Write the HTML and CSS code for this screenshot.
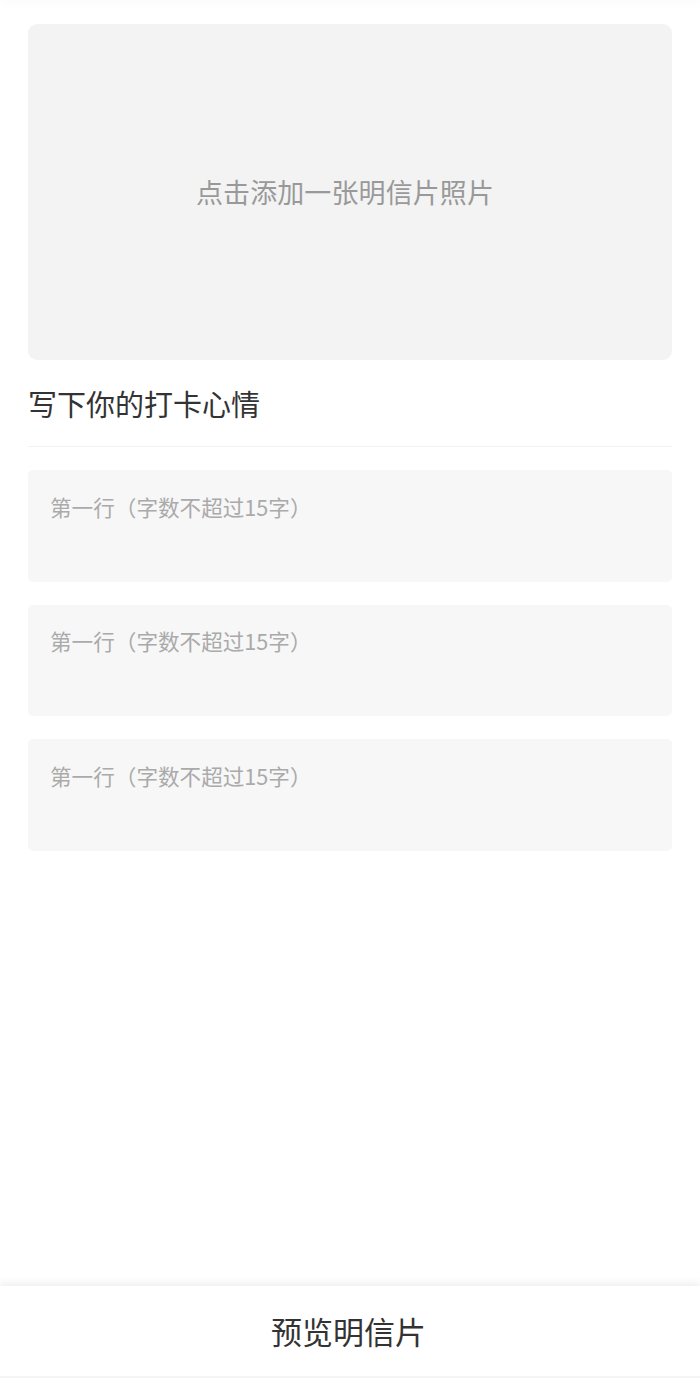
FILE: index.html
```html
<!DOCTYPE html>
<html lang="zh-CN">
<head>
<meta charset="utf-8">
<title>明信片</title>
<link rel="stylesheet" href="styles.css">
</head>
<body>
<div class="page">
  <div class="top-shadow"></div>
  <main class="content">
    <div class="photo-card">点击添加一张明信片照片</div>
    <div class="mood-title">写下你的打卡心情</div>
    <div class="lines">
      <div class="line-input">第一行（字数不超过15字）</div>
      <div class="line-input">第一行（字数不超过15字）</div>
      <div class="line-input">第一行（字数不超过15字）</div>
    </div>
  </main>
  <footer class="bottom-bar">
    <div class="preview-btn">预览明信片</div>
  </footer>
</div>
</body>
</html>
```

FILE: styles.css
```css
html, body {
  margin: 0;
  padding: 0;
  background: #ffffff;
}
body {
  font-family: "Noto Sans CJK SC", "Noto Sans", sans-serif;
}
.page {
  display: flex;
  flex-direction: column;
  height: 1378px;
  overflow: hidden;
}
.top-shadow {
  height: 0;
  box-shadow: 0 0 10px 1px rgba(0, 0, 0, 0.08);
}
.content {
  flex: 1;
  padding: 24px 28px 0;
}
.photo-card {
  height: 335.5px;
  background: #f3f3f3;
  border-radius: 9px;
  display: flex;
  align-items: center;
  justify-content: center;
  padding-right: 10px;
  color: #999999;
  font-size: 27px;
  letter-spacing: 0.1px;
}
.mood-title {
  padding: 25.5px 0 25px 0;
  line-height: 36px;
  font-size: 29px;
  color: #333333;
  border-bottom: 1px solid #f2f2f2;
}
.lines {
  display: flex;
  flex-direction: column;
  gap: 23px;
  margin-top: 23px;
}
.line-input {
  height: 111.5px;
  box-sizing: border-box;
  background: #f7f7f7;
  border-radius: 5px;
  padding: 23.5px 22px 0;
  line-height: 26px;
  font-size: 21.6px;
  color: #aaaaaa;
}
.bottom-bar {
  height: 90px;
  background: #ffffff;
  box-shadow: 0 -3px 8px rgba(0, 0, 0, 0.07);
  border-bottom: 2px solid #f4f4f4;
  display: flex;
  align-items: center;
  justify-content: center;
}
.preview-btn {
  font-size: 31px;
  color: #333333;
  line-height: 40px;
  padding-right: 3px;
}
```
